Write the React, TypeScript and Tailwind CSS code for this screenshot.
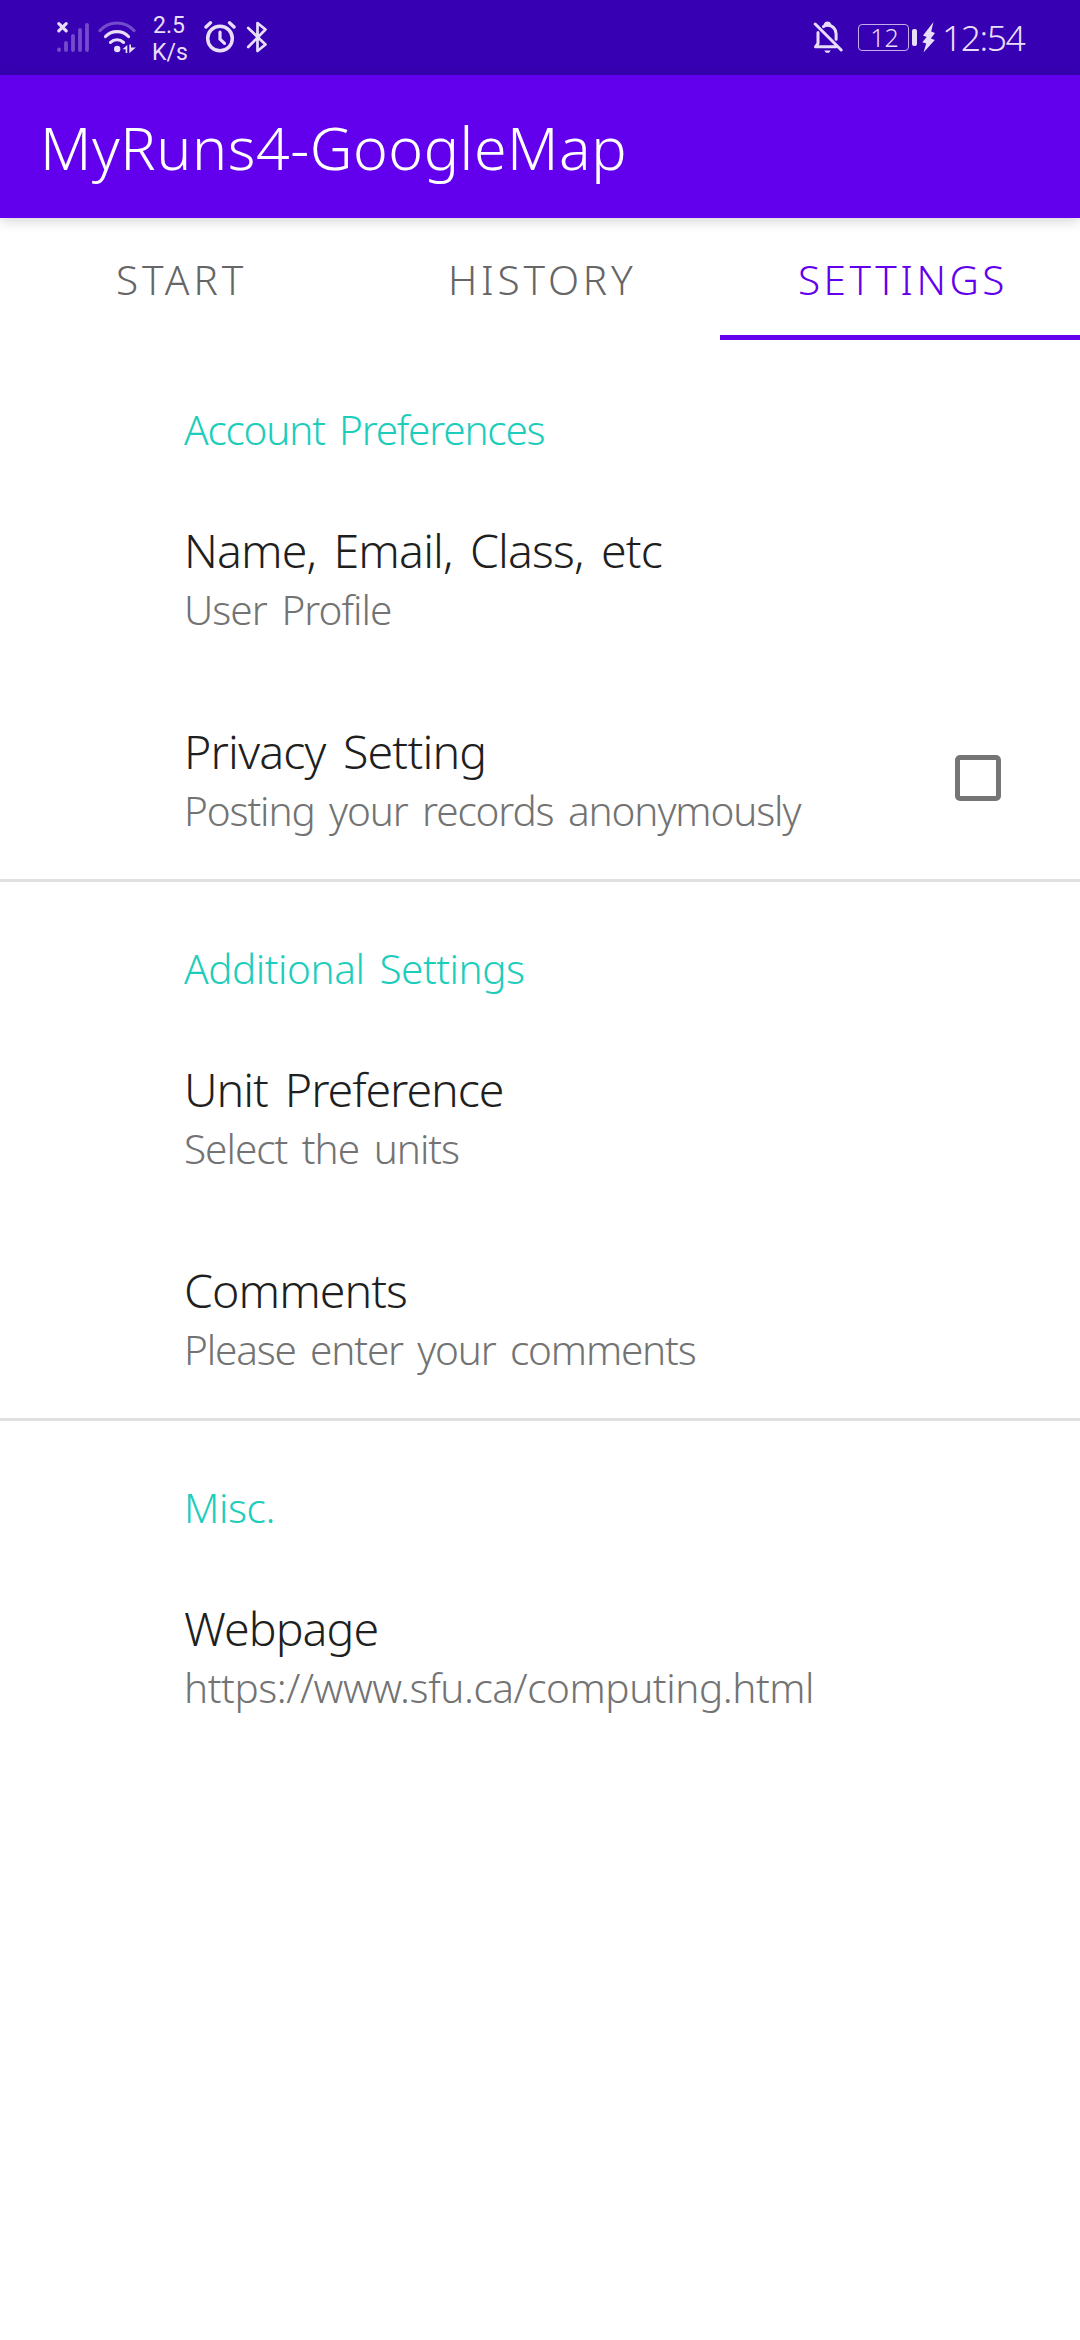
const FG = "#e9defa";

function SignalIcon() {
  return (
    <svg width="34" height="34" viewBox="0 0 34 34" fill="none" stroke={FG} strokeLinecap="round">
      <g strokeWidth="3.8" opacity="0.34">
        <path d="M3 29.3v.8" />
        <path d="M10 23v7.1" />
        <path d="M17 16v14.1" />
        <path d="M24 10v20.1" />
        <path d="M31 5v25.1" />
      </g>
      <path d="M2.8 3.6l7.4 7.2M10.200 3.600l-7.400 7.200" strokeWidth="3.2" />
    </svg>
  );
}

function WifiIcon() {
  return (
    <svg width="40" height="34" viewBox="0 0 40 34" fill="none" stroke={FG} strokeLinecap="round" strokeWidth="3.2">
      <path d="M2 10.500A23 23 0 0 1 36 10.500" opacity="0.34" />
      <path d="M7.500 16.500A16 16 0 0 1 30.500 16.500" />
      <path d="M12.500 22.300A9.500 9.500 0 0 1 25.500 22.300" />
      <circle cx="19.200" cy="29" r="3.200" fill={FG} stroke="none" />
      <path d="M24.500 29.200l4.800-4.200v8h-1.700v-3.800zM31.300 24.400h1.700v3.200h4.800l-6.500 5.600z" fill={FG} stroke="none" />
    </svg>
  );
}

function AlarmIcon() {
  return (
    <svg width="32" height="34" viewBox="0 0 32 34" fill="none" stroke={FG} strokeLinecap="round" strokeLinejoin="round">
      <circle cx="16" cy="18.500" r="12.300" strokeWidth="3.500" />
      <path d="M16 12.200v7l4.500 4.200" strokeWidth="3.200" />
      <path d="M2 7l4.500-4.200M30 7l-4.500-4.200" strokeWidth="3.400" />
    </svg>
  );
}

function BluetoothIcon() {
  return (
    <svg width="22" height="34" viewBox="0 0 22 34" fill="none" stroke={FG} strokeWidth="2.700" strokeLinecap="round" strokeLinejoin="round">
      <path d="M2.200 8l17.300 16.500-8 6.500V3l8 6.500L2.200 27" />
    </svg>
  );
}

function BellOffIcon() {
  return (
    <svg width="30" height="34" viewBox="0 0 30 34" fill="none" stroke={FG} strokeWidth="3" strokeLinecap="round" strokeLinejoin="round">
      <path d="M5 12.500v11l-2.500 3.300h20.500" />
      <path d="M10.500 6.600c1.200-.8 2.600-1.300 4-1.300 5.200 0 8.600 4 8.600 8.800v5.200" />
      <path d="M12 4.500a2.700 2.700 0 0 1 5 0" strokeWidth="2.600" />
      <path d="M2.200 4l26 26" />
      <path d="M11.200 30.500h6.600l-1.800 2.200h-3z" fill={FG} stroke="none" />
    </svg>
  );
}

function StatusBar() {
  return (
    <div className="flex h-[75px] items-start bg-[#3700b3] text-[#e9defa]">
      <div className="flex pt-[20px] pl-[56px]">
        <SignalIcon />
        <div className="ml-[8px]"><WifiIcon /></div>
      </div>
      <div className="mt-[12px] ml-[14px] w-[40px] font-[Roboto] text-[23px] leading-[27px]">
        <div className="pl-[1px]">2.5</div>
        <div>K/s</div>
      </div>
      <div className="mt-[20px] ml-[12px]"><AlarmIcon /></div>
      <div className="mt-[20px] ml-[10px]"><BluetoothIcon /></div>
      <div className="mt-[20px] ml-auto"><BellOffIcon /></div>
      <div className="mt-[24px] ml-[15px] flex h-[27px] w-[51px] items-center justify-center rounded-[4px] border-[1.5px] border-[#c3aee8] pl-[2px] text-[25px] leading-[27px] font-light">12</div>
      <div className="mt-[29px] ml-[3px] h-[17px] w-[5px] rounded-[2px] bg-[#e9defa]" />
      <svg className="mt-[21px] ml-[5px]" width="14" height="32" viewBox="0 0 14 32" fill={FG}>
        <path d="M11.500 1L1 14.500l3.700 1.600L.3 21.300l3.900 1.300L1.500 31.500 12.800 19l-4-1.600L13 12 9.200 10.400z" />
      </svg>
      <div className="mt-[16px] mr-[52px] ml-[6px] w-[86px] text-[35.500px] leading-[42px] font-light tracking-[-1.500px] whitespace-nowrap">12:54</div>
    </div>
  );
}

function Category({ title, spacing }: { title: string; spacing: number }) {
  return (
    <h2 className="h-[135px] pt-[57px] pl-[184px] text-[40.5px] leading-[60px] font-light text-[#1dcdbb] [word-spacing:5px]" style={{ letterSpacing: spacing }}>
      {title}
    </h2>
  );
}

type ItemProps = { title: string; summary: string; titleSpacing: number; summarySpacing: number; checkbox?: boolean };

function Item({ title, summary, titleSpacing, summarySpacing, checkbox }: ItemProps) {
  return (
    <div className="flex h-[201px] pl-[184px]">
      <div className="flex-1 pt-[42px] font-light whitespace-nowrap">
        <div className="text-[46.5px] leading-[60px] text-[#1f1f1f] [word-spacing:6px]" style={{ letterSpacing: titleSpacing }}>{title}</div>
        <div className="text-[40.5px] leading-[60px] text-[#737373] [word-spacing:5px]" style={{ letterSpacing: summarySpacing }}>{summary}</div>
      </div>
      {checkbox && <div role="checkbox" aria-checked="false" className="mt-[76px] mr-[79px] size-[46px] rounded-[5px] border-[5px] border-[#757575]" />}
    </div>
  );
}

const divider = "-mt-px border-t-[3px] border-[#e0e0e0]";

export default function App() {
  return (
    <div className="h-[2340px] w-[1080px] overflow-hidden bg-white font-['Noto_Sans',sans-serif]">
      <StatusBar />
      <header className="h-[143px] bg-[#6200ee] pl-[40px] text-[59px] leading-[145px] font-light tracking-[0.56px] text-white shadow-[0_3px_12px_rgba(0,0,0,0.17)]">
        MyRuns4-GoogleMap
      </header>
      <nav className="mb-[3px] grid h-[122px] grid-cols-3 grid-rows-[122px] text-[40.5px] leading-[124px] font-light text-[#666666]">
        <div className="pl-[116px] tracking-[4px]">START</div>
        <div className="pl-[88px] tracking-[3.8px]">HISTORY</div>
        <div className="relative pl-[78px] tracking-[3.500px] text-[#6200ee]">
          SETTINGS
          <span className="absolute bottom-0 left-0 h-[5px] w-full bg-[#6200ee]" />
        </div>
      </nav>
      <section>
        <Category title="Account Preferences" spacing={-1.2} />
        <Item title="Name, Email, Class, etc" summary="User Profile" titleSpacing={-0.86} summarySpacing={-0.94} />
        <Item title="Privacy Setting" summary="Posting your records anonymously" titleSpacing={-0.8} summarySpacing={-1.1} checkbox />
      </section>
      <section className={divider}>
        <Category title="Additional Settings" spacing={-0.46} />
        <Item title="Unit Preference" summary="Select the units" titleSpacing={-1.04} summarySpacing={-1.0} />
        <Item title="Comments" summary="Please enter your comments" titleSpacing={-0.95} summarySpacing={-1.16} />
      </section>
      <section className={divider}>
        <Category title="Misc." spacing={-0.4} />
        <Item title="Webpage" summary="https://www.sfu.ca/computing.html" titleSpacing={-0.93} summarySpacing={-0.42} />
      </section>
    </div>
  );
}
